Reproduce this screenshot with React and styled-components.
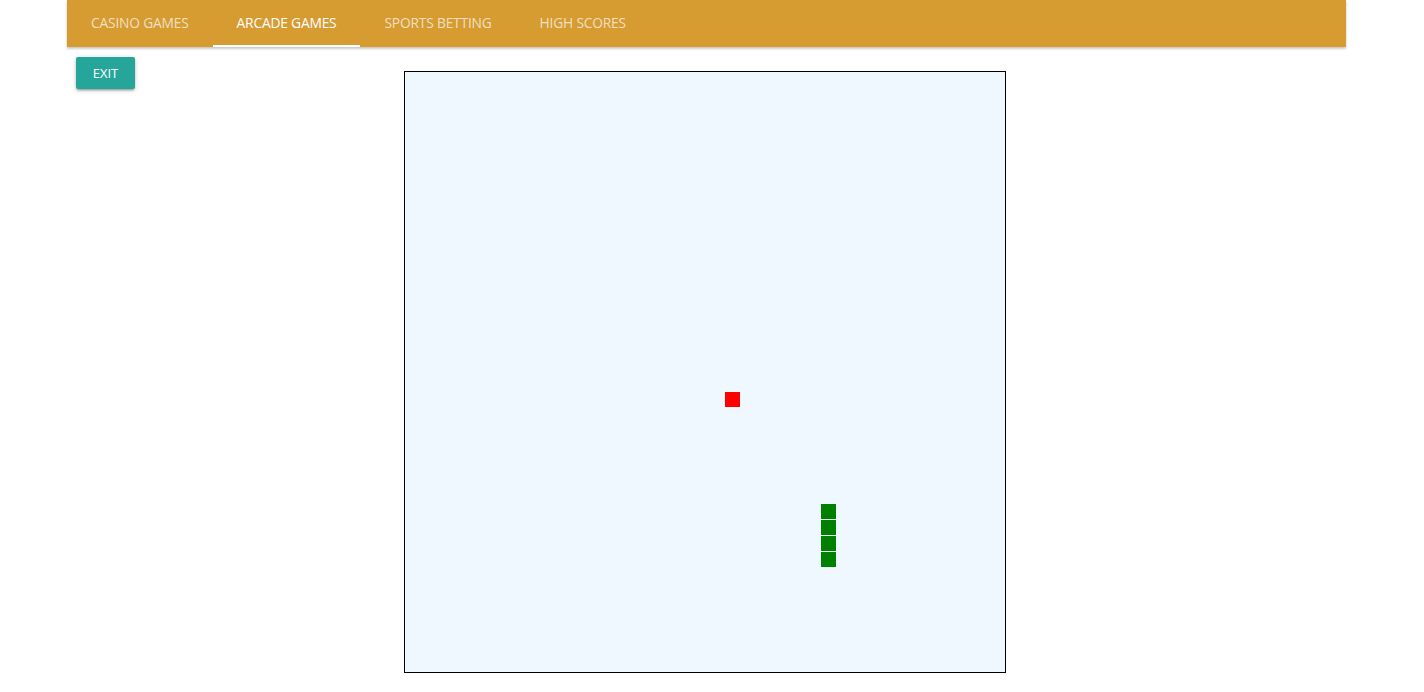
import { useState } from 'react';
import styled, { createGlobalStyle } from 'styled-components';

const CELL = 16;
const GRID = 37;

const TABS = ['Casino Games', 'Arcade Games', 'Sports Betting', 'High Scores'];

const App = () => {
  const [active, setActive] = useState(1);
  const food = { x: 20, y: 20 };
  const snake = [
    { x: 26, y: 27 },
    { x: 26, y: 28 },
    { x: 26, y: 29 },
    { x: 26, y: 30 },
  ];

  return (
    <>
      <GlobalStyle />
      <Page>
        <TabBar>
          {TABS.map((label, i) => (
            <Tab key={label} $active={i === active} onClick={() => setActive(i)}>
              {label}
            </Tab>
          ))}
        </TabBar>
        <Content>
          <ExitButton>Exit</ExitButton>
          <Board>
            <Cell
              $color="#ff0000"
              style={{ gridColumn: food.x + 1, gridRow: food.y + 1 }}
            />
            {snake.map((s, i) => (
              <Cell
                key={i}
                $color="#008000"
                style={{ gridColumn: s.x + 1, gridRow: s.y + 1 }}
              />
            ))}
          </Board>
        </Content>
      </Page>
    </>
  );
};

export default App;

const GlobalStyle = createGlobalStyle`
  body {
    margin: 0;
    background: #fff;
    font-family: "Open Sans", "Noto Sans", sans-serif;
  }
`;

const Page = styled.div`
  padding: 0 78px 0 67px;
`;

const TabBar = styled.nav`
  display: flex;
  height: 47px;
  background: #d69b31;
  box-shadow: 0 2px 2px 0 rgba(0, 0, 0, 0.14), 0 1px 3px 0 rgba(0, 0, 0, 0.12);
`;

const Tab = styled.div`
  position: relative;
  display: flex;
  align-items: center;
  padding: 0 24px 2px;
  font-size: 13.8px;
  text-transform: uppercase;
  letter-spacing: -0.2px;
  cursor: pointer;
  color: ${p => (p.$active ? '#fff' : 'rgba(255, 255, 255, 0.7)')};

  &::after {
    content: '';
    position: absolute;
    left: 0;
    right: 0;
    bottom: 0;
    height: 2px;
    background: ${p => (p.$active ? '#fff' : 'transparent')};
  }
`;

const Content = styled.div`
  display: flex;
  align-items: flex-start;
`;

const ExitButton = styled.button`
  margin: 10px 0 0 9px;
  width: 59px;
  height: 32px;
  border: 0;
  border-radius: 2px;
  background: #26a69a;
  color: #fff;
  font-family: "Open Sans", "Noto Sans", sans-serif;
  font-size: 13px;
  text-transform: uppercase;
  cursor: pointer;
  box-shadow: 0 2px 2px 0 rgba(0, 0, 0, 0.14), 0 3px 1px -2px rgba(0, 0, 0, 0.12),
    0 1px 5px 0 rgba(0, 0, 0, 0.2);
`;

const Board = styled.div`
  margin: 24px 0 0 269px;
  width: 600px;
  height: 600px;
  border: 1px solid #000;
  background: #eff7ff;
  display: grid;
  grid-template-columns: repeat(${GRID}, ${CELL}px);
  grid-template-rows: repeat(${GRID}, ${CELL}px);
  overflow: hidden;
`;

const Cell = styled.div`
  width: 15px;
  height: 15px;
  background: ${p => p.$color};
`;
